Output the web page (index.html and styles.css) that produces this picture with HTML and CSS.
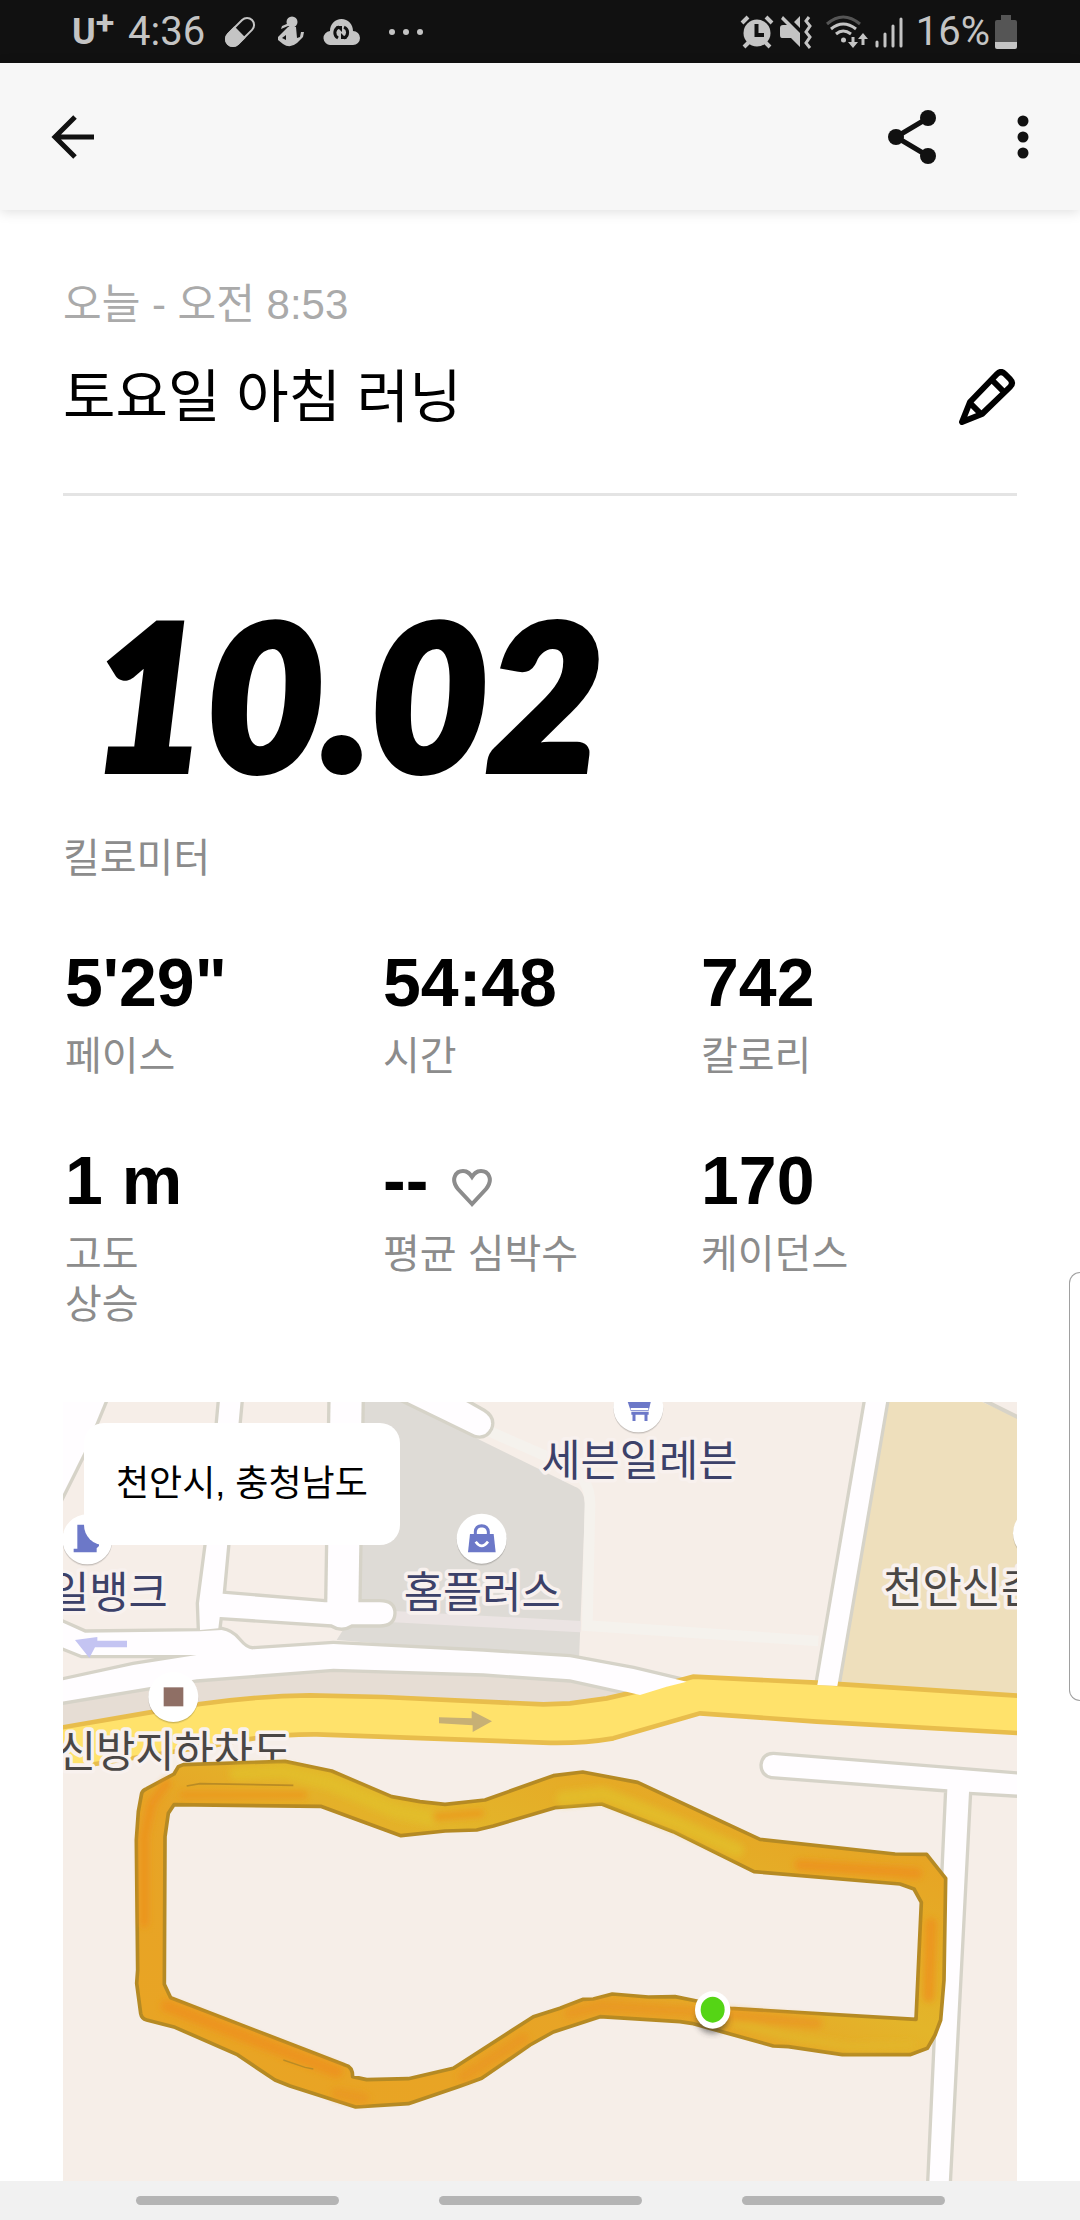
FILE: index.html
```html
<!DOCTYPE html>
<html lang="ko">
<head>
	<meta charset="utf-8">
	<meta name="viewport" content="width=device-width, initial-scale=1">
	<title>토요일 아침 러닝</title>
	<link rel="stylesheet" href="styles.css">
</head>
<body>
	<div class="status-bar">
		<div class="status-left">
			<span class="carrier">U<sup>+</sup></span>
			<span class="clock">4:36</span>
			<svg class="icon-pill" width="34" height="34" viewBox="0 0 34 34">
				<g transform="rotate(45 17 17)">
					<rect x="10" y="0" width="14" height="34" rx="7" fill="none" stroke="#c4c4c4" stroke-width="2"/>
					<path d="M9 17h16v10a8 8 0 0 1-16 0z" fill="#c4c4c4"/>
				</g>
			</svg>
			<svg class="icon-baby" width="28" height="32" viewBox="0 0 28 32" fill="#c4c4c4">
				<circle cx="15" cy="6" r="5.500"/>
				<path d="M11 10L4 13l1-3 7-3zM11 11h8l1 11 3-1 1-5h3l-1 5-6 6q-7 6-14 1l-5-4v-3l8-8z"/>
				<path d="M5 22l4-3v5z" fill="#111"/>
			</svg>
			<svg class="icon-cloud" width="37" height="26" viewBox="0 0 37 26">
				<path d="M8 26a7 7 0 0 1-1-14C7 5 12 0 18.500 0S30 5 30 12a7 7 0 0 1 0 14z" fill="#c4c4c4"/>
				<path d="M16 8a6 6 0 0 0-1 11M21 19a6 6 0 0 0 0-11" fill="none" stroke="#111" stroke-width="3"/>
				<path d="M13 7h6v6zM18 14v6h6z" fill="#111"/>
			</svg>
			<svg class="icon-dots" width="36" height="8" viewBox="0 0 36 8" fill="#c4c4c4">
				<circle cx="4" cy="4" r="3"/><circle cx="18" cy="4" r="3"/><circle cx="32" cy="4" r="3"/>
			</svg>
		</div>
		<div class="status-right">
			<svg width="34" height="34" viewBox="0 0 34 34">
				<g stroke="#c4c4c4" stroke-width="4">
					<path d="M2 8l6-6M26 2l6 6M4 32l6-6M30 32l-6-6"/>
				</g>
				<circle cx="17" cy="18" r="13.500" fill="#c4c4c4"/>
				<path d="M16.500 9v11H24" fill="none" stroke="#111" stroke-width="4"/>
			</svg>
			<svg width="34" height="34" viewBox="0 0 34 34">
				<path d="M1 13q0-3 3-3h4L2 4l2-3 17 17v14l-9-9H3q-2 0-2-3zM21 1v12l-6-6z" fill="#c4c4c4"/>
				<path d="M30 2l-3 4 4 5-4 6 4 5-4 6 4 5" fill="none" stroke="#c4c4c4" stroke-width="3"/>
			</svg>
			<svg class="icon-wifi" width="42" height="34" viewBox="0 0 42 34" fill="none" stroke="#c4c4c4" stroke-width="3">
				<path d="M1 9Q17-5 34 9" stroke="#555"/>
				<path d="M5 14q12-10 25 0M10 19q7-6 15 0"/>
				<circle cx="17.500" cy="25" r="2.500" fill="#c4c4c4" stroke="none"/>
				<path d="M27 22v8M37 30v-9"/>
				<path d="M22 27h10l-5 6zM32 24h10l-5-6z" fill="#c4c4c4" stroke="none"/>
			</svg>
			<svg width="28" height="32" viewBox="0 0 28 32" stroke="#c4c4c4" stroke-width="3" stroke-linecap="round">
				<path d="M2 26v4M10 18v12M18 10v20M26 3v27"/>
			</svg>
			<span class="clock">16%</span>
			<svg width="22" height="34" viewBox="0 0 22 34">
				<path d="M6 0h10v5h4q2 0 2 2v20H0V7q0-2 2-2h4z" fill="#555"/>
				<path d="M0 27h22v5q0 2-2 2H2q-2 0-2-2z" fill="#c4c4c4"/>
			</svg>
		</div>
	</div>

	<header class="toolbar">
		<button class="icon-button" aria-label="뒤로">
			<svg width="44" height="44" viewBox="0 0 44 44" fill="none" stroke="#111" stroke-width="5">
				<path d="M43 22H5M24 2L4 22l20 20"/>
			</svg>
		</button>
		<div class="toolbar-actions">
			<button class="icon-button" aria-label="공유">
				<svg width="48" height="54" viewBox="0 0 48 54" fill="#111">
					<path d="M40 8L8 27l32 19" fill="none" stroke="#111" stroke-width="5"/>
					<circle cx="40" cy="8" r="8"/><circle cx="8" cy="27" r="8"/><circle cx="40" cy="46" r="8"/>
				</svg>
			</button>
			<button class="icon-button" aria-label="더보기">
				<svg width="12" height="44" viewBox="0 0 12 44" fill="#111">
					<circle cx="6" cy="6" r="5.500"/><circle cx="6" cy="22" r="5.500"/><circle cx="6" cy="38" r="5.500"/>
				</svg>
			</button>
		</div>
	</header>

	<main class="content">
		<p class="date">오늘 - 오전 8:53</p>
		<div class="title-row">
			<h1>토요일 아침 러닝</h1>
			<button class="icon-button" aria-label="제목 수정">
				<svg width="58" height="56" viewBox="0 0 58 56" fill="none" stroke="#000" stroke-width="6" stroke-linejoin="round">
					<path d="M3 53l8-20L38 5q4-4 8 0l5 5q4 4 0 8L23 45z"/>
					<path d="M11 34l12 12M33 11l12 12"/>
				</svg>
			</button>
		</div>

		<div class="distance">
			<div class="distance-value">10.02</div>
			<div class="label">킬로미터</div>
		</div>

		<dl class="stats">
			<div class="stat"><dd>5'29"</dd><dt>페이스</dt></div>
			<div class="stat"><dd>54:48</dd><dt>시간</dt></div>
			<div class="stat"><dd>742</dd><dt>칼로리</dt></div>
			<div class="stat"><dd>1 m</dd><dt>고도<br>상승</dt></div>
			<div class="stat">
				<dd>--
					<svg class="heart" width="40" height="38" viewBox="0 0 40 38" fill="none" stroke="#8c8c8c" stroke-width="4">
						<path d="M20 35L6 20C-2 10 4 2 11 2c5 0 7 3 9 6 2-3 4-6 9-6 7 0 13 8 5 18z"/>
					</svg>
				</dd>
				<dt>평균 심박수</dt>
			</div>
			<div class="stat"><dd>170</dd><dt>케이던스</dt></div>
		</dl>

		<section class="map">
			<svg class="map-canvas" viewBox="39 36 2862 2337" preserveAspectRatio="xMidYMin slice">
				<defs>
					<g id="roads">
						<path d="M20 20H170L100 190L20 350z"/>
						<path d="M511 20H573L518 610L505 715L450 720L447 640L470 465z"/>
						<path d="M842 20H935L925 640H832z"/>
						<path d="M500 610L825 637L990 637Q1030 637 1030 670Q1028 703 990 703H905Q875 722 845 703L500 680z"/>
						<path d="M20 690L105 728L450 724L515 720Q545 725 565 750Q590 780 610 778L850 762L1300 785L1560 802L1750 837L1910 875L1850 890L1770 915L1720 903L1560 868L1300 850L850 836L440 868L20 938V875L250 825L440 795L95 795L20 765z"/>
						<path d="M1040 20H1220L1300 65Q1332 85 1320 115Q1306 143 1275 134z"/>
						<path d="M2450 20H2511L2362 888L2302 885z"/>
						<path d="M2170 1095L2920 1155V1215L2757 1205L2695 2400H2637L2692 1198L2165 1158Q2138 1152 2138 1125Q2142 1095 2170 1095z"/>
					</g>
					<path id="highway" d="M20 1015L300 967L450 942Q620 918 780 916L1000 921L1480 943L1560 940L1670 925L1780 900L1930 860L2300 878L2920 918V1030L2300 995L1950 970L1690 1045Q1590 1062 1480 1058L800 1033Q650 1032 500 1065L20 1140z"/>
					<linearGradient id="routeFill" x1="0" x2="1" y1="1" y2="0">
						<stop offset="0" stop-color="#e9a423"/>
						<stop offset=".45" stop-color="#e7a426"/>
						<stop offset=".6" stop-color="#e3b52a"/>
						<stop offset="1" stop-color="#e99a20"/>
					</linearGradient>
					<filter id="soften" x="-20%" y="-20%" width="140%" height="140%"><feGaussianBlur stdDeviation="9"/></filter>
				</defs>

				<!-- ground -->
				<path fill="#f6eee8" d="M0 0H2940V2400H0z"/>
				<path fill="#dedbd6" d="M930 20H1040L1290 150L1575 290Q1605 300 1605 350L1587 810L860 750L930 640z"/>
				<path fill="none" stroke="#f5f2ed" stroke-width="32" d="M1320 125L1560 230Q1620 270 1620 340L1612 707L2305 753"/>
				<path fill="none" stroke="#ebe4e3" stroke-width="34" d="M1030 680L1592 710"/>
				<path fill="#eedfbc" d="M2500 20H2760L2920 90V950L2350 900z"/>
				<path fill="#f6eee8" stroke="#d7d3c8" stroke-width="12" d="M2760 10L2920 90V10z"/>
				<path fill="#e6ddd4" d="M20 930L440 870L850 836L1560 868L1770 915L1560 950H20z"/>
				<path fill="#e6ddd4" d="M20 930H450V950L20 1020z"/>

				<use href="#roads" class="road-casing"/>
				<use href="#highway" class="highway"/>
				<use href="#roads" class="road"/>

				<path fill="#c4c4f2" d="M75 750L142 741V752H231V772H135L118 804z"/>
				<path fill="#c7b075" d="M1167 982L1265 985V962L1326 994L1268 1026V1006L1167 1000z"/>

				<!-- places -->
				<g class="pins">
					<circle cx="1295" cy="446" r="75"/>
					<circle cx="112" cy="448" r="75"/>
					<circle cx="1765" cy="52" r="75"/>
					<circle cx="370" cy="921" r="75"/>
					<circle cx="2964" cy="430" r="75"/>
				</g>
				<g fill="#6c78c8">
					<path d="M1260 432H1331L1337 487H1254z"/>
					<path d="M1276 435V425Q1277 408 1295 407Q1313 408 1315 425V435" fill="none" stroke="#6c78c8" stroke-width="9"/>
					<path d="M1277 455Q1295 480 1314 455" fill="none" stroke="#fff" stroke-width="8"/>
					<path d="M82 404H125V450H147V468L140 475V487H71V476H82z"/>
					<path d="M1728 20H1806L1796 62H1742z"/>
					<path d="M1744 53H1794M1744 70H1796M1752 68V93M1788 68V93" fill="none" stroke="#6c78c8" stroke-width="9"/>
					<path d="M1742 57H1795" stroke="#fff" stroke-width="6"/>
				</g>
				<path fill="#8f6f65" d="M341 892H400V949H341z"/>
				<g class="place-names">
					<text x="0" y="655">일뱅크</text>
					<text x="1061" y="655">홈플러스</text>
					<text x="1474" y="258">세븐일레븐</text>
					<text x="2500" y="640" class="plain">천안신촌</text>
					<text x="20" y="1131" class="plain">신방지하차도</text>
				</g>

				<!-- run route -->
				<path fill="url(#routeFill)" fill-rule="evenodd" stroke="#b58a24" stroke-width="11" stroke-linejoin="round" d="M372 1152L385 1130L400 1124L705 1114L845 1143L1025 1220L1110 1235L1185 1243L1305 1230L1510 1157L1598 1146L1763 1177L2130 1348L2535 1392L2630 1393L2687 1465L2682 1770L2672 1890L2655 1935L2632 1975L2580 1994H2377L2215 1970L2170 1968L1925 1900L1890 1895L1650 1880L1510 1926L1440 1965L1295 2065L1225 2090L1075 2141L917 2151L720 2088L675 2070L560 1993L375 1912L290 1890Q275 1886 272 1870L260 1780L263 1740L259 1350L265 1265L275 1210Q278 1200 290 1196z
					M372 1244L812 1249L1053 1337L1185 1323L1280 1320L1330 1308L1515 1253L1655 1242L1870 1325L2112 1445L2550 1482L2592 1497L2614 1537L2598 1888L2040 1855L1940 1833L1875 1820L1795 1821L1687 1812L1630 1827L1600 1828L1530 1855L1450 1880L1210 2035L1075 2066L950 2069L908 2060Q908 2030 885 2025L362 1823L343 1783L345 1340L355 1270z"/>
				<g fill="none" stroke-linejoin="round" stroke-linecap="round" opacity=".75" filter="url(#soften)">
					<path stroke="#e2c02b" stroke-width="44" d="M560 1150L700 1145L840 1180L1040 1265L1140 1285M1540 1225L1660 1212L1880 1300L2060 1380"/>
					<path stroke="#e2b82b" stroke-width="26" d="M2060 1900L2210 1938L2400 1970L2580 1965"/>
					<path stroke="#ee8f1e" stroke-width="26" d="M350 1180L305 1240L283 1340L283 1600"/>
					<path stroke="#ee8f1e" stroke-width="36" d="M350 1848L600 1945L860 2045"/>
					<path stroke="#ec961f" stroke-width="24" d="M400 1215H760M1160 1280L1290 1270"/>
					<path stroke="#ee8f1e" stroke-width="34" d="M2250 1425L2540 1445L2600 1450M2643 1600L2636 1820"/>
					<path stroke="#ea9620" stroke-width="34" d="M1560 1870L1650 1848L1900 1862L2100 1880L2300 1900M1240 2060L1420 1945M860 2110L940 2125"/>
				</g>
				<path fill="none" stroke="#b98b25" stroke-width="5" d="M410 1188L450 1181L730 1186"/>
				<path fill="none" stroke="#b98b25" stroke-width="4" d="M700 2010L765 2032L790 2037"/>

				<!-- start point -->
				<ellipse cx="1987" cy="1885" rx="46" ry="44" fill="#333" opacity=".6" filter="url(#soften)"/>
				<ellipse cx="1988" cy="1860" rx="53" ry="56" fill="#fff"/>
				<ellipse cx="1988" cy="1859" rx="36" ry="39" fill="#55d515"/>
			</svg>
			<div class="place-chip">천안시, 충청남도</div>
		</section>
	</main>

	<div class="edge-handle"></div>

	<nav class="nav-bar">
		<button aria-label="최근 앱"></button>
		<button aria-label="홈"></button>
		<button aria-label="이전"></button>
	</nav>
</body>
</html>
```

FILE: styles.css
```css
* {
	box-sizing: border-box;
}

body {
	margin: 0;
	min-height: 100vh;
	display: flex;
	flex-direction: column;
	background-color: #fff;
	color: #000;
	font-family: "Liberation Sans", "Noto Sans CJK KR", sans-serif;
	overflow-x: hidden;
}

h1, p, dl, dd {
	margin: 0;
}

svg {
	display: block;
	flex: none;
}

/* status bar */
.status-bar {
	display: flex;
	justify-content: space-between;
	align-items: center;
	height: 63px;
	padding: 0 63px 0 72px;
	background-color: #111;
	color: #c4c4c4;
	font-family: Roboto, sans-serif;
}

.status-left,
.status-right {
	display: flex;
	align-items: center;
}

.status-right {
	gap: 5px;
}

.carrier {
	display: flex;
	width: 56px;
	font: bold 36px/44px Roboto, sans-serif;
}

.carrier sup {
	font-size: 34px;
	line-height: 24px;
}

.clock {
	font-size: 40px;
	line-height: 48px;
}

.icon-pill {
	margin-left: 18px;
}

.icon-baby {
	margin-left: 20px;
}

.icon-cloud {
	margin-left: 18px;
}

.icon-dots {
	margin-left: 28px;
}

.icon-wifi {
	margin: 0 2px 0 8px;
}

.status-right .clock {
	margin: 0 0 0 8px;
}

/* toolbar */
.toolbar {
	display: flex;
	justify-content: space-between;
	align-items: center;
	height: 147px;
	padding: 0 51px;
	background-color: #f7f7f7;
	box-shadow: 0 2px 12px rgba(0, 0, 0, 0.13);
}

.toolbar-actions {
	display: flex;
	align-items: center;
	gap: 81px;
}

.icon-button {
	padding: 0;
	border: none;
	background: none;
	cursor: pointer;
}

/* content */
.content {
	flex: 1;
	display: flex;
	flex-direction: column;
	padding: 70px 63px 0;
}

.date {
	color: #aaa;
	font-size: 42px;
	line-height: 50px;
}

.title-row {
	display: flex;
	justify-content: space-between;
	align-items: center;
	margin-top: 27px;
	padding-bottom: 56px;
	border-bottom: 3px solid #e4e4e4;
}

h1 {
	font-size: 57px;
	font-weight: normal;
	line-height: 80px;
}

.distance {
	margin-top: 117px;
}

.distance-value {
	padding-left: 28px;
	font: italic 900 200px/160px Lato, sans-serif;
	-webkit-text-stroke: 8px #000;
}

.label,
.stat dt {
	color: #8c8c8c;
	font-size: 40px;
	line-height: 50px;
}

.distance .label {
	margin-top: 60px;
}

.stats {
	display: grid;
	grid-template-columns: repeat(3, 1fr);
	row-gap: 65px;
	margin-top: 65px;
}

.stat {
	display: flex;
	flex-direction: column;
	gap: 15px;
	padding-left: 2px;
}

.stat dd {
	display: flex;
	align-items: center;
	gap: 24px;
	font-size: 68px;
	font-weight: bold;
	line-height: 68px;
}

.heart {
	margin-top: 16px;
}

/* map */
.map {
	position: relative;
	flex: 1;
	min-height: 600px;
	margin-top: 73px;
	overflow: hidden;
	background-color: #f6eee8;
}

.map-canvas {
	position: absolute;
	width: 100%;
	height: 100%;
}

.road-casing {
	fill: #d6d3c8;
	stroke: #d6d3c8;
	stroke-width: 20px;
}

.road {
	fill: #fffdff;
}

.highway {
	fill: #ffe26b;
	stroke: #e8bd4c;
	stroke-width: 14px;
}

.pins {
	fill: #fff;
	filter: drop-shadow(0 4px 2px rgba(0, 0, 0, 0.2));
}

.place-names {
	fill: #3c4169;
	stroke: #f8f1ee;
	stroke-width: 22px;
	stroke-linejoin: round;
	paint-order: stroke;
	font-family: "Noto Sans CJK KR", sans-serif;
	font-size: 128px;
	font-weight: 400;
}

.place-names .plain {
	fill: #4a4745;
}

.place-chip {
	position: absolute;
	top: 21px;
	left: 21px;
	padding: 36px 32px;
	border-radius: 20px;
	background-color: #fff;
	font-size: 36px;
	line-height: 50px;
}

/* edge panel handle over the page */
.edge-handle {
	position: absolute;
	top: 1272px;
	right: 0;
	width: 11px;
	height: 429px;
	border: 1px solid #a0a0a0;
	border-right: none;
	border-radius: 14px 0 0 14px;
	background-color: #fff;
}

/* navigation bar */
.nav-bar {
	display: flex;
	justify-content: center;
	align-items: center;
	gap: 100px;
	height: 39px;
	background-color: #f1f1f1;
}

.nav-bar button {
	width: 203px;
	height: 9px;
	padding: 0;
	border: none;
	border-radius: 5px;
	background-color: #b4b4b4;
}
```
